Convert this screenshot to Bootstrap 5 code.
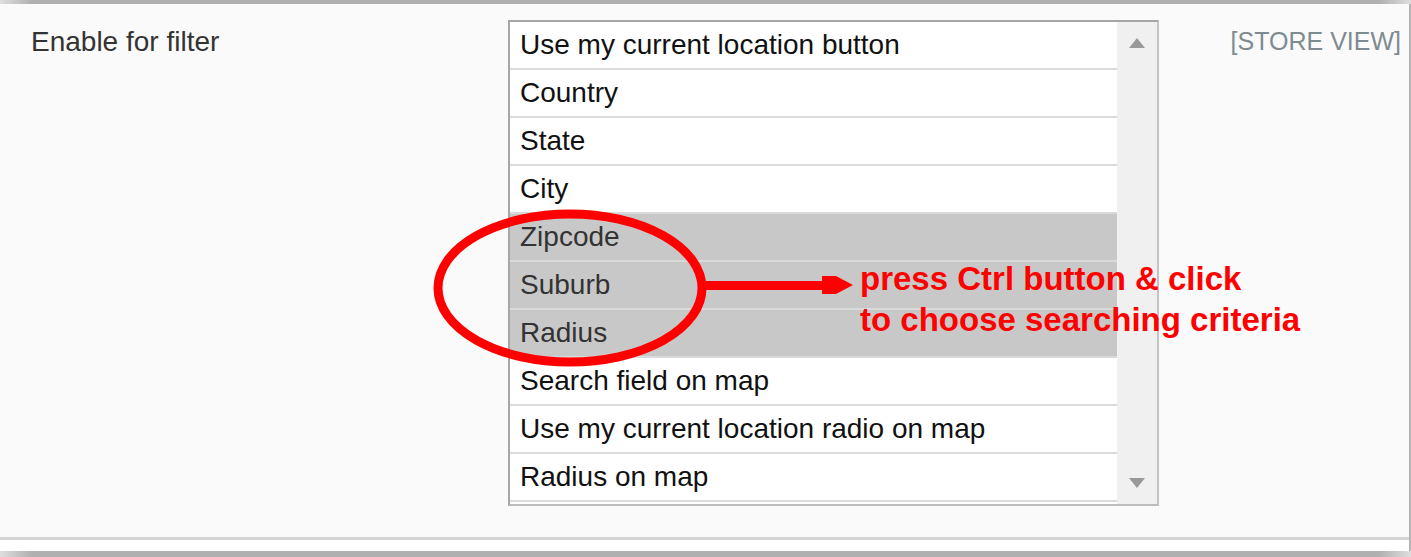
<!DOCTYPE html>
<html lang="en">
<head>
<meta charset="utf-8">
<meta name="viewport" content="width=device-width, initial-scale=1">
<title>Enable for filter</title>
<link href="https://cdn.jsdelivr.net/npm/bootstrap@5.3.0/dist/css/bootstrap.min.css" rel="stylesheet">
<style>
  body { font-family: "Liberation Sans", Arial, sans-serif; font-size: 28px; line-height: 46px; color: #333; background: #fff; }
  .edge { height: 4px; background: linear-gradient(to right, #dedede, #b0b0b0 32px, #b0b0b0 calc(100% - 32px), #dedede); }
  .edge-bottom { height: 6px; }
  .frame { padding-bottom: 11px; border-right: 2px solid #b4b4b4; }
  .setting { display: grid; grid-template-columns: 508fr 651fr 250fr; padding: 16px 0 31px; background: #fafafa; border-bottom: 3px solid #d3d3d3; }
  .setting-label { padding-left: 31px; line-height: 44px; }
  .setting-scope { padding-right: 8px; font-size: 25px; line-height: 42px; color: #7d8b91; }
  .picker { border: 2px solid; border-color: #a6a6a6 #c3c3c3 #bcbcbc #a6a6a6; background: #fff; }
  .picker select { height: 482px; overflow: hidden; outline: 0; padding: 0; color: #111; background: #fff; scrollbar-width: none; }
  .picker select::-webkit-scrollbar { display: none; }
  .picker option { height: 48px; padding: 7px 10px 0; border-bottom: 2px solid #dadada; }
  .picker option:checked { background: #c8c8c8 linear-gradient(#c8c8c8, #c8c8c8); -webkit-text-fill-color: #333; }
  .track { width: 40px; background: #f0f0f0; }
  .track button { line-height: 0; padding: 16px 0; }
  .note { left: -76px; top: 189px; color: #f00; pointer-events: none; }
  .note p { font-size: 33px; line-height: 41px; padding-top: 49px; }
</style>
</head>
<body>
<div class="edge"></div>
<main class="frame">
  <div class="setting">
    <label class="setting-label text-nowrap" for="criteria">Enable for filter</label>
    <div class="position-relative">
      <div class="picker d-flex">
        <select id="criteria" class="flex-grow-1 border-0" multiple size="10">
          <option>Use my current location button</option>
          <option>Country</option>
          <option>State</option>
          <option>City</option>
          <option selected>Zipcode</option>
          <option selected>Suburb</option>
          <option selected>Radius</option>
          <option>Search field on map</option>
          <option>Use my current location radio on map</option>
          <option>Radius on map</option>
        </select>
        <div class="track d-flex flex-column justify-content-between">
          <button type="button" class="border-0 bg-transparent" aria-label="Scroll up"><svg width="16" height="10" viewBox="0 0 16 10"><path d="M0 10L8 0L16 10Z" fill="#999"/></svg></button>
          <button type="button" class="border-0 bg-transparent" aria-label="Scroll down"><svg width="16" height="10" viewBox="0 0 16 10"><path d="M0 0L8 10L16 0Z" fill="#999"/></svg></button>
        </div>
      </div>
      <div class="note position-absolute d-flex text-nowrap">
        <svg class="flex-shrink-0" width="428" height="160" viewBox="0 0 428 160" aria-hidden="true">
          <ellipse cx="138" cy="79" rx="132" ry="74" fill="none" stroke="#f00" stroke-width="9"/>
          <path d="M270 72H390V67H404L421 76L404 85H390V81H270Z" fill="#f00"/>
        </svg>
        <p class="mb-0 fw-bold">press Ctrl button &amp; click<br>to choose searching criteria</p>
      </div>
    </div>
    <div class="setting-scope text-end text-nowrap">[STORE VIEW]</div>
  </div>
</main>
<div class="edge edge-bottom"></div>
<script src="https://cdn.jsdelivr.net/npm/bootstrap@5.3.0/dist/js/bootstrap.bundle.min.js"></script>
</body>
</html>
